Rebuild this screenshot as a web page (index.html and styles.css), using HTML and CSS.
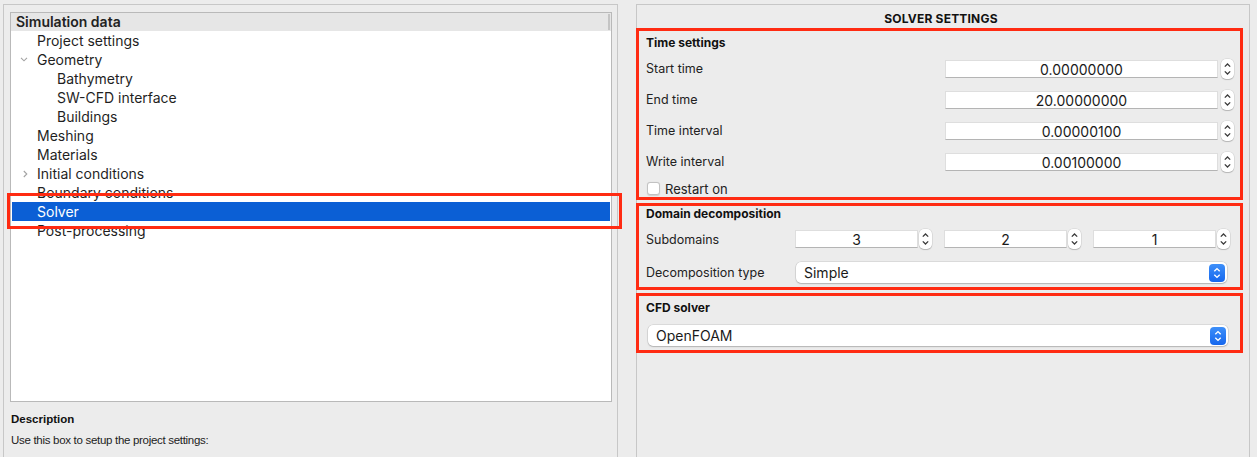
FILE: index.html
```html
<!DOCTYPE html>
<html lang="en">
<head>
<meta charset="utf-8">
<title>Solver settings</title>
<link rel="stylesheet" href="styles.css">
</head>
<body>
<div class="app">
  <section class="left-pane">
    <div class="tree">
      <div class="tree-header">Simulation data</div>
      <ul class="tree-list">
        <li class="item l1"><span class="twisty"></span><span class="label">Project settings</span></li>
        <li class="item l1"><span class="twisty"><svg width="8" height="5" viewBox="0 0 8 5"><path d="M1 0.8 L4 3.8 L7 0.8" fill="none" stroke="#a3a3a3" stroke-width="1.1"/></svg></span><span class="label">Geometry</span></li>
        <li class="item l2"><span class="twisty"></span><span class="label">Bathymetry</span></li>
        <li class="item l2"><span class="twisty"></span><span class="label">SW-CFD interface</span></li>
        <li class="item l2"><span class="twisty"></span><span class="label">Buildings</span></li>
        <li class="item l1"><span class="twisty"></span><span class="label">Meshing</span></li>
        <li class="item l1"><span class="twisty"></span><span class="label">Materials</span></li>
        <li class="item l1"><span class="twisty tw-right"><svg width="5" height="8" viewBox="0 0 5 8"><path d="M0.8 1 L3.8 4 L0.8 7" fill="none" stroke="#a3a3a3" stroke-width="1.1"/></svg></span><span class="label">Initial conditions</span></li>
        <li class="item l1"><span class="twisty"></span><span class="label">Boundary conditions</span></li>
        <li class="item l1 selected"><span class="twisty"></span><span class="label">Solver</span></li>
        <li class="item l1"><span class="twisty"></span><span class="label">Post-processing</span></li>
      </ul>
    </div>
    <div class="desc">
      <div class="desc-title">Description</div>
      <div class="desc-text">Use this box to setup the project settings:</div>
    </div>
  </section>

  <section class="right-pane">
    <h2 class="pane-title">SOLVER SETTINGS</h2>

    <div class="group g-time">
      <div class="group-title">Time settings</div>
      <div class="form-row">
        <span class="row-label">Start time</span>
        <div class="spin spin-wide"><div class="field">0.00000000</div><span class="stepper"><svg width="13" height="20" viewBox="0 0 13 20"><path d="M3.8 7.6 L6.5 5 L9.2 7.6" fill="none" stroke="#3a3a3a" stroke-width="1.3"/><path d="M3.8 12.4 L6.5 15 L9.2 12.4" fill="none" stroke="#3a3a3a" stroke-width="1.3"/></svg></span></div>
      </div>
      <div class="form-row">
        <span class="row-label">End time</span>
        <div class="spin spin-wide"><div class="field">20.00000000</div><span class="stepper"><svg width="13" height="20" viewBox="0 0 13 20"><path d="M3.8 7.6 L6.5 5 L9.2 7.6" fill="none" stroke="#3a3a3a" stroke-width="1.3"/><path d="M3.8 12.4 L6.5 15 L9.2 12.4" fill="none" stroke="#3a3a3a" stroke-width="1.3"/></svg></span></div>
      </div>
      <div class="form-row">
        <span class="row-label">Time interval</span>
        <div class="spin spin-wide"><div class="field">0.00000100</div><span class="stepper"><svg width="13" height="20" viewBox="0 0 13 20"><path d="M3.8 7.6 L6.5 5 L9.2 7.6" fill="none" stroke="#3a3a3a" stroke-width="1.3"/><path d="M3.8 12.4 L6.5 15 L9.2 12.4" fill="none" stroke="#3a3a3a" stroke-width="1.3"/></svg></span></div>
      </div>
      <div class="form-row">
        <span class="row-label">Write interval</span>
        <div class="spin spin-wide"><div class="field">0.00100000</div><span class="stepper"><svg width="13" height="20" viewBox="0 0 13 20"><path d="M3.8 7.6 L6.5 5 L9.2 7.6" fill="none" stroke="#3a3a3a" stroke-width="1.3"/><path d="M3.8 12.4 L6.5 15 L9.2 12.4" fill="none" stroke="#3a3a3a" stroke-width="1.3"/></svg></span></div>
      </div>
      <div class="check-row"><span class="checkbox"></span><span class="check-label">Restart on</span></div>
    </div>

    <div class="group g-domain">
      <div class="group-title">Domain decomposition</div>
      <div class="sub-row">
        <span class="row-label col-label">Subdomains</span>
        <div class="spin spin-small"><div class="field">3</div><span class="stepper"><svg width="13" height="20" viewBox="0 0 13 20"><path d="M3.8 7.6 L6.5 5 L9.2 7.6" fill="none" stroke="#3a3a3a" stroke-width="1.3"/><path d="M3.8 12.4 L6.5 15 L9.2 12.4" fill="none" stroke="#3a3a3a" stroke-width="1.3"/></svg></span></div>
        <div class="spin spin-small"><div class="field">2</div><span class="stepper"><svg width="13" height="20" viewBox="0 0 13 20"><path d="M3.8 7.6 L6.5 5 L9.2 7.6" fill="none" stroke="#3a3a3a" stroke-width="1.3"/><path d="M3.8 12.4 L6.5 15 L9.2 12.4" fill="none" stroke="#3a3a3a" stroke-width="1.3"/></svg></span></div>
        <div class="spin spin-small"><div class="field">1</div><span class="stepper"><svg width="13" height="20" viewBox="0 0 13 20"><path d="M3.8 7.6 L6.5 5 L9.2 7.6" fill="none" stroke="#3a3a3a" stroke-width="1.3"/><path d="M3.8 12.4 L6.5 15 L9.2 12.4" fill="none" stroke="#3a3a3a" stroke-width="1.3"/></svg></span></div>
      </div>
      <div class="type-row">
        <span class="row-label col-label">Decomposition type</span>
        <div class="combo combo-type"><span class="combo-text">Simple</span><span class="combo-btn"><svg width="16" height="18" viewBox="0 0 16 18"><path d="M5.3 7.2 L8 4.6 L10.7 7.2" fill="none" stroke="#fff" stroke-width="1.4"/><path d="M5.3 10.8 L8 13.4 L10.7 10.8" fill="none" stroke="#fff" stroke-width="1.4"/></svg></span></div>
      </div>
    </div>

    <div class="group g-cfd">
      <div class="group-title">CFD solver</div>
      <div class="combo combo-cfd"><span class="combo-text">OpenFOAM</span><span class="combo-btn"><svg width="16" height="18" viewBox="0 0 16 18"><path d="M5.3 7.2 L8 4.6 L10.7 7.2" fill="none" stroke="#fff" stroke-width="1.4"/><path d="M5.3 10.8 L8 13.4 L10.7 10.8" fill="none" stroke="#fff" stroke-width="1.4"/></svg></span></div>
    </div>
  </section>
</div>
<div class="highlight"></div>
</body>
</html>
```

FILE: styles.css
```css
* { box-sizing: border-box; }

html, body {
  margin: 0;
  padding: 0;
  width: 1257px;
  height: 457px;
  overflow: hidden;
  background: #ececec;
  font-family: "Inter", "Liberation Sans", sans-serif;
  color: #1f1f1f;
}

.app {
  display: flex;
  gap: 18px;
  padding: 4px 0 0 3px;
  height: 470px;
}

/* ---------- left pane ---------- */
.left-pane {
  width: 615px;
  height: 470px;
  border: 1px solid #c7c7c7;
  border-bottom: none;
  padding: 7px 5px 0 6px;
}

.tree {
  height: 390px;
  background: #fff;
  border: 1px solid #b9b9b9;
}

.tree-header {
  position: relative;
  height: 18px;
  line-height: 18px;
  background: #e6e6e6;
  padding-left: 5px;
  font-size: 14px;
  font-weight: 600;
  color: #222;
}
.tree-header::after {
  content: "";
  position: absolute;
  right: 1px;
  top: 1px;
  width: 2px;
  height: 16px;
  background: #c4c4c4;
}

.tree-list {
  list-style: none;
  margin: 0;
  padding: 0;
}

.item {
  display: flex;
  align-items: center;
  height: 19px;
  font-size: 14px;
  color: #1f1f1f;
  padding-left: 8px;
}
.item.l2 { padding-left: 28px; }

.twisty {
  width: 18px;
  display: flex;
  align-items: center;
  padding-left: 1px;
}
.twisty.tw-right { padding-left: 4px; }

.item.selected {
  background: #0b5fd5;
  color: #fff;
  margin: 0 1px;
  padding-left: 7px;
}

.desc {
  padding-left: 1px;
  font-family: "Liberation Sans", "Inter", sans-serif;
}
.desc-title {
  margin-top: 9px;
  font-size: 11.5px;
  font-weight: 700;
  line-height: 16px;
  color: #111;
}
.desc-text {
  margin-top: 5px;
  font-size: 11.5px;
  letter-spacing: -0.3px;
  line-height: 16px;
  color: #222;
}

/* ---------- right pane ---------- */
.right-pane {
  width: 614px;
  height: 470px;
  border: 1px solid #c7c7c7;
  border-bottom: none;
}

.pane-title {
  margin: 0;
  height: 23px;
  padding-top: 6px;
  line-height: 16px;
  text-align: center;
  font-size: 12px;
  font-weight: 700;
  letter-spacing: 0.2px;
  color: #111;
  padding-right: 4px;
}

.group {
  width: 607px;
  margin-left: -1px;
  border: 3px solid #ff2b12;
  padding: 0 6px 0 7px;
}

.group-title {
  height: 16px;
  line-height: 16px;
  font-size: 12px;
  font-weight: 700;
  color: #111;
}

.row-label {
  font-size: 12.5px;
  color: #222;
}

/* time settings */
.g-time { height: 172px; padding-top: 4px; }
.g-time .group-title { margin-bottom: 2px; }

.form-row {
  display: flex;
  align-items: center;
  justify-content: space-between;
  height: 31px;
}

.spin {
  display: flex;
  align-items: center;
  gap: 3px;
}
.field {
  height: 18px;
  line-height: 17px;
  background: #fff;
  border: 1px solid #dedede;
  border-bottom-color: #b4b4b4;
  text-align: center;
  font-size: 14px;
  color: #1a1a1a;
}
.spin-wide .field { width: 273px; }

.stepper {
  width: 13px;
  height: 20px;
  background: #fff;
  border-radius: 5px;
  box-shadow: 0 0 0 0.5px rgba(0,0,0,0.12), 0 1px 1px rgba(0,0,0,0.18);
  display: flex;
}

.check-row {
  display: flex;
  align-items: center;
  gap: 5px;
  height: 17px;
  margin-top: 3px;
}
.checkbox {
  width: 13px;
  height: 13px;
  margin-left: 1px;
  background: #fff;
  border: 1px solid #c2c2c2;
  border-radius: 3px;
  box-shadow: 0 0.5px 1px rgba(0,0,0,0.12);
}
.check-label {
  font-size: 13px;
  color: #222;
}

/* domain decomposition */
.g-domain {
  height: 87px;
  margin-top: 3px;
  padding-bottom: 4px;
}
.col-label { width: 149px; flex-shrink: 0; }

.sub-row {
  display: flex;
  align-items: center;
  height: 20px;
  margin-top: 7px;
}
.spin-small { gap: 1px; margin-right: 12px; }
.spin-small .field { width: 123px; }

.type-row {
  display: flex;
  align-items: center;
  height: 21px;
  margin-top: 13px;
}

.combo {
  position: relative;
  height: 21px;
  background: #fff;
  border-radius: 5px;
  box-shadow: 0 0 0 0.5px rgba(0,0,0,0.14), 0 1px 1.5px rgba(0,0,0,0.18);
  display: flex;
  align-items: center;
  justify-content: space-between;
  padding: 0 2px 0 8px;
}
.combo-type { width: 431px; margin-left: 1px; }
.combo-cfd { width: 580px; margin: 9px 0 0 2px; }

.combo-text {
  font-size: 14px;
  color: #1a1a1a;
}
.combo-btn {
  width: 16px;
  height: 18px;
  border-radius: 4px;
  background: linear-gradient(#3d8ff9, #1567ee);
  display: flex;
}

/* cfd solver */
.g-cfd {
  height: 60px;
  margin-top: 3px;
  padding-top: 4px;
}

/* annotation highlight over the selected tree row */
.highlight {
  position: absolute;
  left: 7px;
  top: 193px;
  width: 615px;
  height: 36px;
  border: 3px solid #ff2b12;
}
```
